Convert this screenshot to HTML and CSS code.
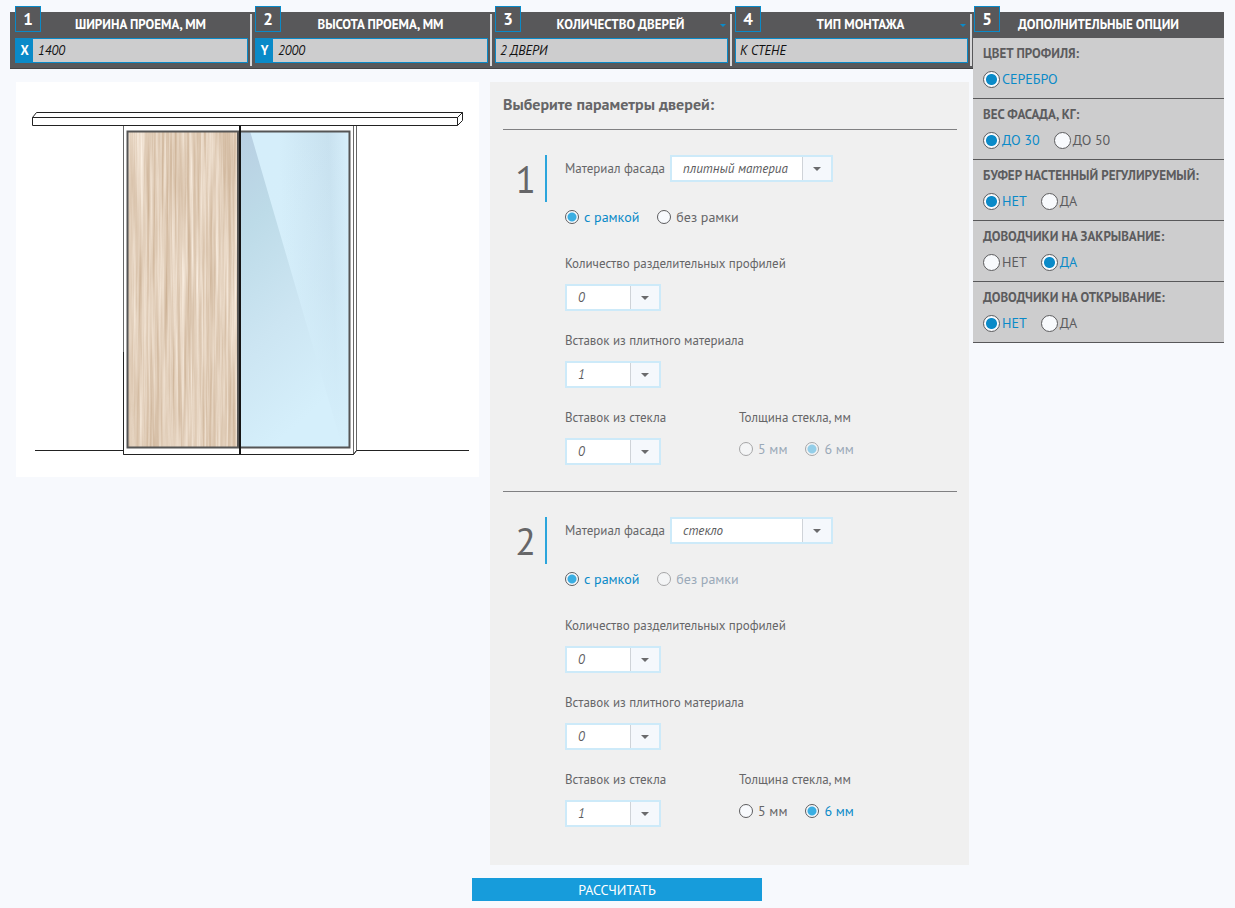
FILE: index.html
```html
<!DOCTYPE html>
<html lang="ru">
<head>
<meta charset="utf-8">
<title>Расчёт раздвижных дверей</title>
<link rel="stylesheet" href="styles.css">
</head>
<body>
<form class="page">
  <main class="main">
    <header class="steps">
      <div class="step">
        <span class="badge">1</span>
        <label class="step-title" for="width">ШИРИНА ПРОЕМА, ММ</label>
        <div class="step-field"><span class="axis">X</span><input class="step-input" id="width" type="text" value="1400"></div>
      </div>
      <div class="step">
        <span class="badge">2</span>
        <label class="step-title" for="height">ВЫСОТА ПРОЕМА, ММ</label>
        <div class="step-field"><span class="axis">Y</span><input class="step-input" id="height" type="text" value="2000"></div>
      </div>
      <div class="step step-list">
        <span class="badge">3</span>
        <label class="step-title" for="doors">КОЛИЧЕСТВО ДВЕРЕЙ</label>
        <div class="step-field"><select class="step-input" id="doors"><option>2 ДВЕРИ</option></select></div>
      </div>
      <div class="step step-list">
        <span class="badge">4</span>
        <label class="step-title" for="mount">ТИП МОНТАЖА</label>
        <div class="step-field"><select class="step-input" id="mount"><option>К СТЕНЕ</option></select></div>
      </div>
    </header>

    <div class="content">
      <figure class="preview">
        <svg class="drawing" viewBox="0 0 463 395" role="img" aria-label="Двери">
          <defs>
            <filter id="grain" x="0" y="0" width="1" height="1" color-interpolation-filters="sRGB">
              <feTurbulence type="fractalNoise" baseFrequency="0.32 0.007" numOctaves="4" seed="8"/>
              <feColorMatrix type="matrix" values="0.24 0 0 0 0.765  0.32 0 0 0 0.65  0.4 0 0 0 0.53  0 0 0 0 1"/>
            </filter>
            <linearGradient id="glass" x1="0" y1="0.1" x2="1" y2="0">
              <stop offset="0" stop-color="#d5eefa"/>
              <stop offset="0.35" stop-color="#d5eefa"/>
              <stop offset="0.8" stop-color="#c8e1ef"/>
              <stop offset="1" stop-color="#d8f0fc"/>
            </linearGradient>
            <linearGradient id="lower" x1="0" y1="0" x2="0" y2="1">
              <stop offset="0" stop-color="#d5effb" stop-opacity="0"/>
              <stop offset="0.5" stop-color="#d5effb" stop-opacity="0.3"/>
              <stop offset="1" stop-color="#d5effb"/>
            </linearGradient>
            <linearGradient id="shade" x1="0" y1="0" x2="0.3" y2="1">
              <stop offset="0" stop-color="#b8cfe2"/>
              <stop offset="0.3" stop-color="#bddbe8"/>
              <stop offset="0.65" stop-color="#cce5f2"/>
              <stop offset="1" stop-color="#d5effb"/>
            </linearGradient>
          </defs>
          <g fill="#fff" stroke="#222" stroke-width="1">
            <path d="M16.500 35.500 20.500 30.500H446.500L441.500 35.500Z"/>
            <path d="M441.500 35.500 446.500 30.500V38.500L441.500 43.500Z"/>
            <path d="M16.500 35.500H441.500V43.500H16.500Z"/>
            <path d="M19 368.500H107M340 368.500H453"/>
          </g>
          <path d="M107.500 44V372.500H337.500L340.500 368.500V44M337.500 44V372" fill="none" stroke="#666"/>
          <path d="M107.500 270V372.500H337.500L340.500 368.500" fill="none" stroke="#222"/>
          <rect x="111" y="49" width="111" height="317" filter="url(#grain)"/>
          <path d="M225 49H334V366H225Z" fill="url(#glass)"/>
          <path d="M225 49H334V366H225Z" fill="url(#lower)"/>
          <path d="M225 49H234L322 350 328 366H225Z" fill="url(#shade)"/>
          <path d="M111.500 49.500H222V365.500H111.500ZM224 49.500H333.500V365.500H224" fill="none" stroke="#555" stroke-width="2"/>
          <path d="M224 44V372" stroke="#151515" stroke-width="2"/>
        </svg>
      </figure>

      <section class="params">
        <h2 class="params-title">Выберите параметры дверей:</h2>

        <article class="door">
          <div class="number">1</div>
          <div class="fields">
            <div class="material">
              <label for="m1">Материал фасада</label>
              <span class="pick pick-wide"><select id="m1"><option>плитный материа</option></select></span>
            </div>
            <div class="radios">
              <label class="radio"><input type="radio" name="frame1" checked><span>с рамкой</span></label>
              <label class="radio"><input type="radio" name="frame1"><span>без рамки</span></label>
            </div>
            <div class="field">
              <label for="p1">Количество разделительных профилей</label>
              <span class="pick"><select id="p1"><option>0</option></select></span>
            </div>
            <div class="field">
              <label for="b1">Вставок из плитного материала</label>
              <span class="pick"><select id="b1"><option>1</option></select></span>
            </div>
            <div class="glass-row">
              <div class="field">
                <label for="g1">Вставок из стекла</label>
                <span class="pick"><select id="g1"><option>0</option></select></span>
              </div>
              <div class="field" role="radiogroup" aria-labelledby="t1">
                <span id="t1">Толщина стекла, мм</span>
                <div class="radios thickness">
                  <label class="radio"><input type="radio" name="thick1" disabled><span>5 мм</span></label>
                  <label class="radio"><input type="radio" name="thick1" checked disabled><span>6 мм</span></label>
                </div>
              </div>
            </div>
          </div>
        </article>

        <article class="door">
          <div class="number">2</div>
          <div class="fields">
            <div class="material">
              <label for="m2">Материал фасада</label>
              <span class="pick pick-wide"><select id="m2"><option>стекло</option></select></span>
            </div>
            <div class="radios">
              <label class="radio"><input type="radio" name="frame2" checked><span>с рамкой</span></label>
              <label class="radio"><input type="radio" name="frame2" disabled><span>без рамки</span></label>
            </div>
            <div class="field">
              <label for="p2">Количество разделительных профилей</label>
              <span class="pick"><select id="p2"><option>0</option></select></span>
            </div>
            <div class="field">
              <label for="b2">Вставок из плитного материала</label>
              <span class="pick"><select id="b2"><option>0</option></select></span>
            </div>
            <div class="glass-row">
              <div class="field">
                <label for="g2">Вставок из стекла</label>
                <span class="pick"><select id="g2"><option>1</option></select></span>
              </div>
              <div class="field" role="radiogroup" aria-labelledby="t2">
                <span id="t2">Толщина стекла, мм</span>
                <div class="radios thickness">
                  <label class="radio"><input type="radio" name="thick2"><span>5 мм</span></label>
                  <label class="radio"><input type="radio" name="thick2" checked><span>6 мм</span></label>
                </div>
              </div>
            </div>
          </div>
        </article>
      </section>
    </div>
  </main>

  <aside class="options">
    <span class="badge">5</span>
    <h2 class="options-title">ДОПОЛНИТЕЛЬНЫЕ ОПЦИИ</h2>
    <section class="option">
      <h3>ЦВЕТ ПРОФИЛЯ:</h3>
      <div class="choices"><label class="choice"><input type="radio" name="color" checked><span>СЕРЕБРО</span></label></div>
    </section>
    <section class="option">
      <h3>ВЕС ФАСАДА, КГ:</h3>
      <div class="choices">
        <label class="choice"><input type="radio" name="weight" checked><span>ДО 30</span></label>
        <label class="choice"><input type="radio" name="weight"><span>ДО 50</span></label>
      </div>
    </section>
    <section class="option">
      <h3>БУФЕР НАСТЕННЫЙ РЕГУЛИРУЕМЫЙ:</h3>
      <div class="choices">
        <label class="choice"><input type="radio" name="buffer" checked><span>НЕТ</span></label>
        <label class="choice"><input type="radio" name="buffer"><span>ДА</span></label>
      </div>
    </section>
    <section class="option">
      <h3>ДОВОДЧИКИ НА ЗАКРЫВАНИЕ:</h3>
      <div class="choices">
        <label class="choice"><input type="radio" name="closing"><span>НЕТ</span></label>
        <label class="choice"><input type="radio" name="closing" checked><span>ДА</span></label>
      </div>
    </section>
    <section class="option">
      <h3>ДОВОДЧИКИ НА ОТКРЫВАНИЕ:</h3>
      <div class="choices">
        <label class="choice"><input type="radio" name="opening" checked><span>НЕТ</span></label>
        <label class="choice"><input type="radio" name="opening"><span>ДА</span></label>
      </div>
    </section>
  </aside>

  <button class="submit" type="button">РАССЧИТАТЬ</button>
</form>
</body>
</html>
```

FILE: styles.css
```css
* { box-sizing: border-box; }

body {
  margin: 0;
  background: #f7f9fd;
  color: #5c5c5e;
  font: 13px/18px "PT Sans", "Noto Sans", "Open Sans", sans-serif;
}

h2, h3, figure { margin: 0; }
input, select, button { font-family: inherit; margin: 0; }

.page {
  display: grid;
  grid-template-columns: minmax(0, 1fr) 251px;
  row-gap: 13px;
  align-items: start;
  padding: 12px 11px 7px 10px;
}

/* Steps bar */
.steps {
  display: grid;
  grid-template-columns: repeat(4, minmax(0, 1fr));
  padding: 2px 1px 2px 2px;
  background: #58585a;
  border-bottom: 1px solid #434345;
}

.step {
  position: relative;
  padding: 1px 2px 3px 3px;
  border-right: 2px solid #d8d8da;
}

.step-title {
  display: block;
  height: 23px;
  padding-left: 18px;
  line-height: 19px;
  text-align: center;
  color: #fff;
  font-weight: 700;
}

.badge {
  position: absolute;
  top: -8px;
  left: 3px;
  width: 26px;
  height: 26px;
  border: 1px solid #0a8ac8;
  background: #58585a;
  color: #fff;
  font-size: 17px;
  font-weight: 700;
  line-height: 25px;
  text-align: center;
}

.step-list::after {
  content: "";
  position: absolute;
  top: 10px;
  right: 4px;
  border: 3px solid transparent;
  border-top-color: #0a8ac8;
  border-bottom: 0;
}

.step-field {
  display: flex;
  height: 25px;
  border: 1px solid #0a8ac8;
  background: #cdcdce;
}

.axis {
  width: 17px;
  background: #0a8ac8;
  color: #fff;
  font-weight: 700;
  line-height: 23px;
  text-align: center;
}

.step-input {
  flex: 1;
  min-width: 0;
  padding: 0 5px;
  border: 0;
  background: none;
  appearance: none;
  color: #111;
  font-size: 13px;
  font-style: italic;
}

select.step-input { padding: 0 4px; }

/* Content */
.content {
  display: grid;
  grid-template-columns: minmax(0, 463fr) minmax(0, 479fr);
  gap: 11px;
  align-items: start;
  padding: 13px 4px 0 6px;
}

.preview { background: #fff; }
.drawing { display: block; width: 100%; }

.params {
  padding: 0 12px 12px 13px;
  background: #f0f0f0;
  color: #666668;
}

.params-title {
  padding: 12px 0 15px;
  font-size: 16px;
  line-height: 20px;
}

.door {
  display: flex;
  align-items: flex-start;
  gap: 18px;
  padding: 25px 0 26px;
  border-top: 1px solid #808082;
}

.number {
  width: 44px;
  padding-right: 9px;
  border-right: 2px solid #2ba5dc;
  font-size: 38px;
  font-weight: 300;
  line-height: 47px;
  text-align: right;
}

.fields { flex: 1; }

.material {
  display: flex;
  gap: 5px;
  line-height: 27px;
}

.pick {
  position: relative;
  display: block;
  width: 96px;
}

.pick-wide { width: 163px; }

.pick::after {
  content: "";
  position: absolute;
  top: 12px;
  right: 12px;
  border: 4px solid transparent;
  border-top-color: #6a6a6c;
  border-bottom: 0;
  pointer-events: none;
}

.pick select {
  display: block;
  width: 100%;
  height: 27px;
  padding: 0 30px 0 11px;
  border: 2px solid #cdeaf9;
  border-radius: 0;
  appearance: none;
  background: linear-gradient(to left, #f5f8fc 28px, #cfd3d8 28px, #cfd3d8 29px, #fff 29px);
  color: #5c5c5e;
  font-size: 13px;
  font-style: italic;
}

.radios {
  display: flex;
  gap: 18px;
  margin: 26px 0 29px;
}

.radio {
  display: flex;
  align-items: center;
  gap: 5px;
  font-size: 14px;
}

.radio input {
  width: 14px;
  height: 14px;
  border: 1px solid #5c5c5e;
  border-radius: 50%;
  appearance: none;
  background: #f8fafd;
}

.radio input:checked {
  background: radial-gradient(circle, #3aaee2 4px, #f8fafd 5px);
}

.radio input:checked + span { color: #0a8ac8; font-weight: 500; }
.radio input:disabled { opacity: 0.5; }
.radio input:disabled + span { color: #9aa9b8; font-weight: 400; }

.field > :first-child { display: block; margin-bottom: 11px; }
.field + .field, .glass-row { margin-top: 21px; }

.glass-row {
  display: grid;
  grid-template-columns: 174px 1fr;
}

.glass-row .field { margin-top: 0; }
.thickness { margin: 13px 0 0; }

/* Options */
.options {
  position: relative;
  background: #cdcdce;
}

.options .badge { top: -6px; left: 1px; }

.options-title {
  height: 26px;
  background: #58585a;
  color: #fff;
  font-size: 13px;
  line-height: 25px;
  text-align: center;
}

.option {
  padding: 7px 10px 10px;
  border-bottom: 1px solid #58585a;
}

.option h3 {
  margin-bottom: 7px;
  font-size: 13px;
  line-height: 18px;
}

.choices { display: flex; gap: 14px; }

.choice {
  display: flex;
  align-items: center;
  gap: 2px;
  font-size: 14px;
}

.choice input {
  width: 17px;
  height: 17px;
  border: 1px solid #5c5c5e;
  border-radius: 50%;
  appearance: none;
  background: #f8fafd;
}

.choice input:checked {
  background: radial-gradient(circle, #0a8ac8 5px, #f8fafd 6px);
}

.choice input:checked + span { color: #0a8ac8; }

.submit {
  grid-column: 1 / -1;
  justify-self: center;
  width: 290px;
  height: 23px;
  padding: 0;
  border: 0;
  background: #179cdb;
  color: #fff;
  font-size: 14px;
  line-height: 24px;
}
```
